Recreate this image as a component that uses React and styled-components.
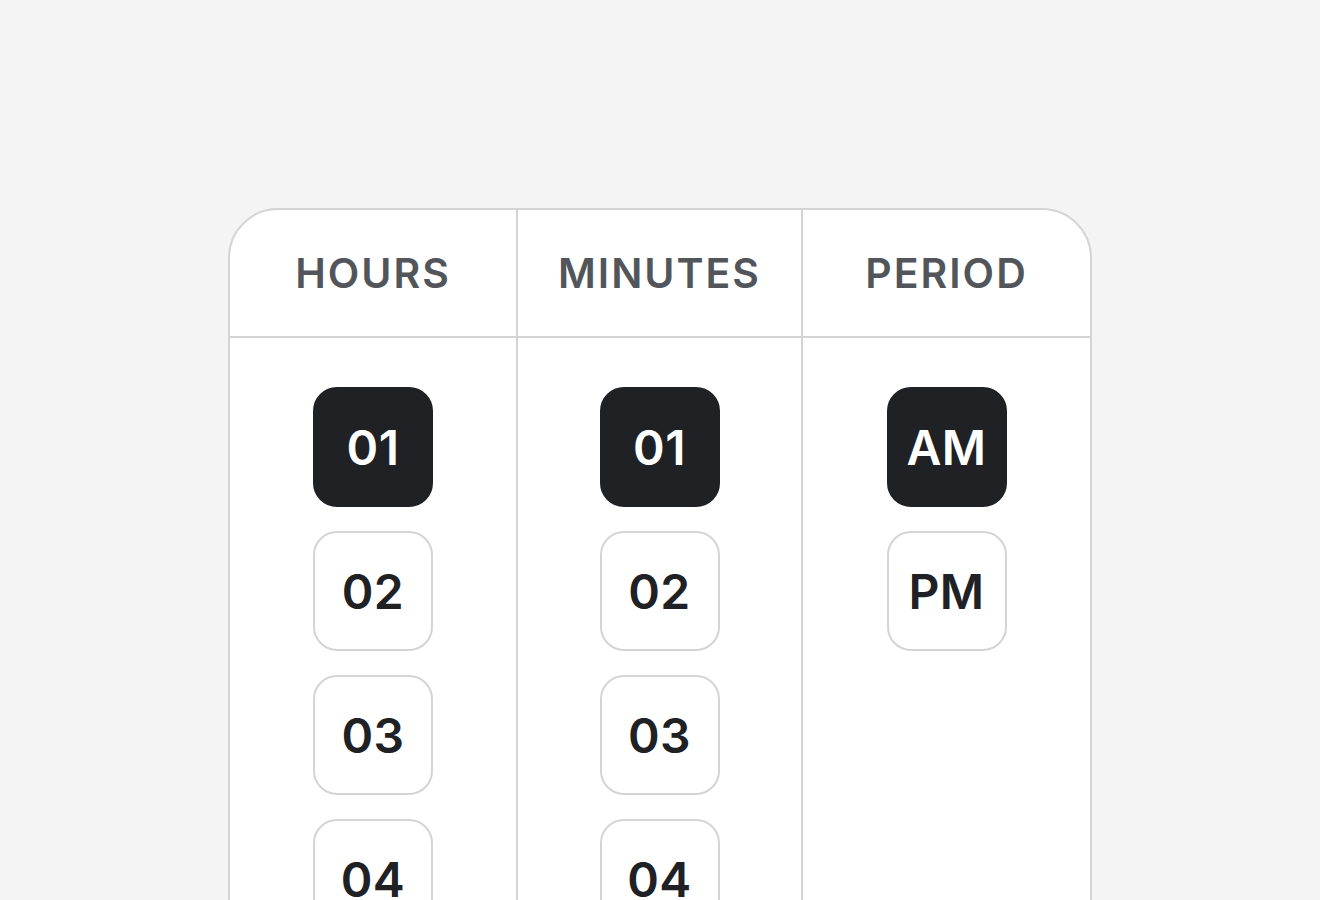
import React, { useState } from "react";
import styled, { createGlobalStyle } from "styled-components";

const GlobalStyle = createGlobalStyle`
  html, body {
    margin: 0;
    padding: 0;
    background: #f4f4f4;
    overflow: hidden;
  }
  body {
    font-family: Inter, "Noto Sans", "Liberation Sans", sans-serif;
  }
`;

const Page = styled.div`
  display: flex;
  justify-content: center;
  padding-top: 208px;
  height: 900px;
  box-sizing: border-box;
`;

const Picker = styled.div`
  width: 864px;
  display: grid;
  grid-template-columns: 286px 285px 289px;
  grid-template-rows: 128px 1fr;
  background: #ffffff;
  border: 2px solid #d4d4d4;
  border-radius: 50px 50px 0 0;
  box-sizing: border-box;
  align-self: flex-start;
  overflow: hidden;
`;

const HeaderCell = styled.div`
  display: flex;
  align-items: center;
  justify-content: center;
  border-bottom: 2px solid #d4d4d4;
  border-left: ${(p) => (p.$first ? "none" : "2px solid #d4d4d4")};
  font-size: 41px;
  font-weight: 600;
  letter-spacing: 2px;
  color: #52565b;
`;

const Column = styled.div`
  display: flex;
  flex-direction: column;
  align-items: center;
  gap: 24px;
  padding-top: 49px;
  height: 700px;
  border-left: ${(p) => (p.$first ? "none" : "2px solid #d4d4d4")};
`;

const Option = styled.button`
  width: 120px;
  height: 120px;
  flex-shrink: 0;
  border-radius: 24px;
  box-sizing: border-box;
  border: 2px solid ${(p) => (p.$active ? "#202124" : "#d4d4d4")};
  background: ${(p) => (p.$active ? "#202124" : "#ffffff")};
  color: ${(p) => (p.$active ? "#ffffff" : "#202124")};
  font-family: Inter, "Noto Sans", "Liberation Sans", sans-serif;
  font-size: 48px;
  font-weight: 600;
  letter-spacing: 0.5px;
  display: flex;
  align-items: center;
  justify-content: center;
  padding: 0;
  cursor: pointer;
`;

const pad = (n) => String(n).padStart(2, "0");
const hours = Array.from({ length: 12 }, (_, i) => pad(i + 1));
const minutes = Array.from({ length: 12 }, (_, i) => pad(i + 1));
const periods = ["AM", "PM"];

export default function App() {
  const [hour, setHour] = useState("01");
  const [minute, setMinute] = useState("01");
  const [period, setPeriod] = useState("AM");

  return (
    <>
      <GlobalStyle />
      <Page>
        <Picker>
          <HeaderCell $first>HOURS</HeaderCell>
          <HeaderCell>MINUTES</HeaderCell>
          <HeaderCell>PERIOD</HeaderCell>
          <Column $first>
            {hours.map((h) => (
              <Option key={h} $active={h === hour} onClick={() => setHour(h)}>
                {h}
              </Option>
            ))}
          </Column>
          <Column>
            {minutes.map((m) => (
              <Option
                key={m}
                $active={m === minute}
                onClick={() => setMinute(m)}
              >
                {m}
              </Option>
            ))}
          </Column>
          <Column>
            {periods.map((p) => (
              <Option
                key={p}
                $active={p === period}
                onClick={() => setPeriod(p)}
              >
                {p}
              </Option>
            ))}
          </Column>
        </Picker>
      </Page>
    </>
  );
}
